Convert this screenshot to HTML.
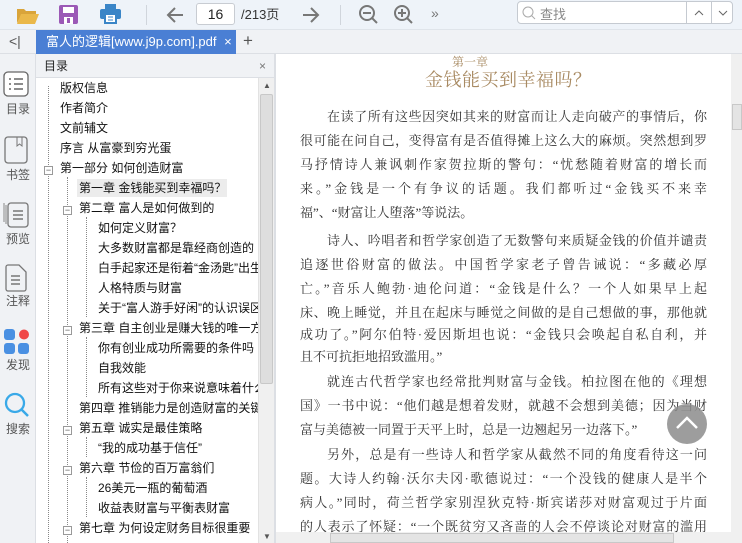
<!DOCTYPE html>
<html><head><meta charset="utf-8"><style>
*{margin:0;padding:0;box-sizing:border-box}
body{width:742px;height:543px;overflow:hidden;position:relative;background:#fff;font-family:"Liberation Sans","Noto Sans CJK SC",sans-serif;color:#222}
.abs{position:absolute}
#tb{left:0;top:0;width:742px;height:30px;background:#eef3f9;border-bottom:1px solid #dfe4ea}
#tabs{left:0;top:30px;width:742px;height:24px;background:#f0f2f5;border-bottom:1px solid #dcdfe4}
#side{left:0;top:54px;width:36px;height:489px;background:#f0f2f5;border-right:1px solid #dcdfe4}
#toc{left:36px;top:54px;width:238px;height:489px;background:#fff}
#toch{left:0;top:0;width:238px;height:24px;background:#f0f2f5;border-bottom:1px solid #dcdfe4;font-size:12px;line-height:24px;padding-left:8px}
.ti{position:absolute;font-size:12px;line-height:16px;white-space:nowrap;color:#111}
.sl{position:absolute;font-size:12px;color:#555;text-align:center;width:36px;left:0}
.ln{position:absolute;left:300px;width:407px;font-family:"Liberation Serif","Noto Serif CJK SC",serif;font-size:13px;line-height:18px;color:#333;text-align:justify;text-align-last:justify;white-space:nowrap;overflow:hidden}
.ln.l{text-align-last:left}
.box{position:absolute;width:9px;height:9px;border:1px solid #999;background:#fff;font-size:9px;line-height:7px;text-align:center;color:#555}
</style></head><body>
<div id="tb" class="abs">
<svg class="abs" style="left:16px;top:5px" width="24" height="20"><path d="M1 4h7l2 2h10v3H6L1 18z" fill="#d9a43a"/><path d="M5 9h18l-4 10H1z" fill="#eab84a"/></svg>
<svg class="abs" style="left:59px;top:5px" width="19" height="19"><rect x="0" y="0" width="19" height="19" rx="2" fill="#9b59b6"/><rect x="4" y="2" width="11" height="6" fill="#fff"/><rect x="5" y="12" width="9" height="7" fill="#fff"/><rect x="8" y="13" width="3" height="5" fill="#9b59b6"/></svg>
<svg class="abs" style="left:100px;top:4px" width="21" height="20"><rect x="5" y="0" width="11" height="5" fill="#3a85c7"/><rect x="0" y="5" width="21" height="10" rx="2" fill="#3a85c7"/><rect x="5" y="10" width="11" height="9" fill="#fff" stroke="#3a85c7" stroke-width="2"/><line x1="8" y1="13" x2="13" y2="13" stroke="#3a85c7"/><line x1="8" y1="16" x2="13" y2="16" stroke="#3a85c7"/></svg>
<div class="abs" style="left:146px;top:5px;width:1px;height:20px;background:#d0d5dc"></div>
<svg class="abs" style="left:165px;top:6px" width="20" height="18"><path d="M18 9H3M10 2L3 9l7 7" stroke="#777" stroke-width="2" fill="none"/></svg>
<div class="abs" style="left:196px;top:3px;width:39px;height:22px;border:1px solid #c8ccd2;border-radius:3px;background:#fff;font-size:14px;line-height:20px;text-align:center">16</div>
<div class="abs" style="left:241px;top:5px;font-size:13px;line-height:20px;color:#333">/213页</div>
<svg class="abs" style="left:301px;top:6px" width="20" height="18"><path d="M2 9h15M10 2l7 7-7 7" stroke="#777" stroke-width="2" fill="none"/></svg>
<div class="abs" style="left:340px;top:5px;width:1px;height:20px;background:#d0d5dc"></div>
<svg class="abs" style="left:358px;top:4px" width="22" height="22"><circle cx="9" cy="9" r="7" stroke="#777" stroke-width="2" fill="none"/><path d="M5 9h8M14 14l5 5" stroke="#777" stroke-width="2"/></svg>
<svg class="abs" style="left:393px;top:4px" width="22" height="22"><circle cx="9" cy="9" r="7" stroke="#777" stroke-width="2" fill="none"/><path d="M5 9h8M9 5v8M14 14l5 5" stroke="#777" stroke-width="2"/></svg>
<div class="abs" style="left:431px;top:5px;font-size:14px;color:#777">»</div>
<div class="abs" style="left:517px;top:1px;width:216px;height:23px;border:1px solid #c5cad1;border-radius:4px;background:#fff"></div>
<svg class="abs" style="left:522px;top:6px" width="14" height="14"><circle cx="6" cy="6" r="5" stroke="#aaa" fill="none"/><path d="M9.5 9.5l3.5 3.5" stroke="#aaa"/></svg>
<div class="abs" style="left:540px;top:4px;font-size:13px;color:#888">查找</div>
<div class="abs" style="left:686px;top:1px;width:1px;height:23px;background:#c5cad1"></div>
<div class="abs" style="left:711px;top:1px;width:1px;height:23px;background:#c5cad1"></div>
<svg class="abs" style="left:694px;top:10px" width="10" height="6"><path d="M1 5l4-4 4 4" stroke="#666" fill="none"/></svg>
<svg class="abs" style="left:718px;top:10px" width="10" height="6"><path d="M1 1l4 4 4-4" stroke="#666" fill="none"/></svg>
</div>
<div id="tabs" class="abs">
<div class="abs" style="left:9px;top:3px;font-size:14px;color:#555">&lt;|</div>
<div class="abs" style="left:36px;top:0;width:200px;height:24px;background:#4a7fd4;color:#fff;font-size:13px;line-height:24px;padding-left:10px">富人的逻辑[www.j9p.com].pdf <span style="margin-left:4px">×</span></div>
<div class="abs" style="left:243px;top:1px;font-size:17px;color:#555">+</div>
</div>
<div id="side" class="abs">
<svg class="abs" style="left:3px;top:17px" width="26" height="26"><rect x="1" y="1" width="24" height="24" rx="4" fill="#fff" stroke="#666" stroke-width="1.3"/><path d="M6 8h2M11 8h9M6 13h2M11 13h9M6 18h2M11 18h9" stroke="#666" stroke-width="1.5"/></svg>
<div class="sl" style="top:46px">目录</div>
<svg class="abs" style="left:4px;top:82px" width="24" height="28"><rect x="1" y="1" width="22" height="26" rx="3" fill="none" stroke="#777" stroke-width="1.3"/><path d="M13 1v9l2.5-2 2.5 2V1" stroke="#777" fill="none"/></svg>
<div class="sl" style="top:112px">书签</div>
<svg class="abs" style="left:3px;top:146px" width="26" height="28"><path d="M3 24V5M1 22V3" stroke="#888" fill="none"/><rect x="5" y="3" width="20" height="24" rx="3" fill="none" stroke="#777" stroke-width="1.3"/><path d="M10 11h10M10 15h10M10 19h10" stroke="#777" stroke-width="1.5"/></svg>
<div class="sl" style="top:176px">预览</div>
<svg class="abs" style="left:5px;top:210px" width="22" height="28"><path d="M1 3a2 2 0 0 1 2-2h11l7 7v17a2 2 0 0 1-2 2H3a2 2 0 0 1-2-2z" fill="none" stroke="#777" stroke-width="1.3"/><path d="M6 12h9M6 16h9M6 20h9" stroke="#777" stroke-width="1.5"/></svg>
<div class="sl" style="top:238px">注释</div>
<svg class="abs" style="left:4px;top:275px" width="26" height="26"><rect x="0" y="0" width="11" height="11" rx="3" fill="#4a90e2"/><circle cx="20" cy="5.5" r="5" fill="#f04848"/><rect x="0" y="14" width="11" height="11" rx="3" fill="#4a90e2"/><rect x="14" y="14" width="11" height="11" rx="3" fill="#4a90e2"/></svg>
<div class="sl" style="top:302px">发现</div>
<svg class="abs" style="left:4px;top:338px" width="26" height="26"><circle cx="11" cy="11" r="9" stroke="#39a9e8" stroke-width="2.3" fill="none"/><path d="M17 17l7 7" stroke="#39a9e8" stroke-width="2.5"/></svg>
<div class="sl" style="top:366px">搜索</div>
</div>
<div id="toc" class="abs">
<div id="toch" class="abs">目录<span style="position:absolute;right:8px;color:#777">×</span></div>
<div class="abs" style="left:12px;top:32px;width:0;height:457px;border-left:1px dotted #888"></div>
<div class="abs" style="left:31px;top:123px;width:0;height:366px;border-left:1px dotted #888"></div>
<div class="abs" style="left:50px;top:163px;width:0;height:100px;border-left:1px dotted #888"></div>
<div class="abs" style="left:50px;top:283px;width:0;height:60px;border-left:1px dotted #888"></div>
<div class="abs" style="left:50px;top:383px;width:0;height:20px;border-left:1px dotted #888"></div>
<div class="abs" style="left:50px;top:423px;width:0;height:40px;border-left:1px dotted #888"></div>
<div class="abs" style="left:222px;top:24px;width:16px;height:465px;background:#f0f0f0;border-left:1px solid #e2e2e2"></div>
<div class="abs" style="left:224px;top:40px;width:13px;height:290px;background:#dedede;border:1px solid #c8c8c8;border-radius:2px"></div>
<div class="abs" style="left:227px;top:27px;font-size:8px;color:#555">▲</div>
<div class="abs" style="left:227px;top:478px;font-size:8px;color:#555">▼</div>
<div class="abs" style="left:41px;top:125px;width:150px;height:18px;background:#ececec"></div>
<div style="position:absolute;left:0;top:0;width:222px;height:489px;overflow:hidden">
<div class="box" style="left:8px;top:112px">−</div>
<div class="box" style="left:27px;top:152px">−</div>
<div class="box" style="left:27px;top:272px">−</div>
<div class="box" style="left:27px;top:372px">−</div>
<div class="box" style="left:27px;top:412px">−</div>
<div class="box" style="left:27px;top:472px">−</div>
<div class="ti" style="left:24px;top:26px">版权信息</div>
<div class="ti" style="left:24px;top:46px">作者简介</div>
<div class="ti" style="left:24px;top:66px">文前辅文</div>
<div class="ti" style="left:24px;top:86px">序言 从富豪到穷光蛋</div>
<div class="ti" style="left:24px;top:106px">第一部分 如何创造财富</div>
<div class="ti" style="left:43px;top:126px">第一章 金钱能买到幸福吗？</div>
<div class="ti" style="left:43px;top:146px">第二章 富人是如何做到的</div>
<div class="ti" style="left:62px;top:166px">如何定义财富？</div>
<div class="ti" style="left:62px;top:186px">大多数财富都是靠经商创造的</div>
<div class="ti" style="left:62px;top:206px">白手起家还是衔着“金汤匙”出生</div>
<div class="ti" style="left:62px;top:226px">人格特质与财富</div>
<div class="ti" style="left:62px;top:246px">关于“富人游手好闲”的认识误区</div>
<div class="ti" style="left:43px;top:266px">第三章 自主创业是赚大钱的唯一方法</div>
<div class="ti" style="left:62px;top:286px">你有创业成功所需要的条件吗</div>
<div class="ti" style="left:62px;top:306px">自我效能</div>
<div class="ti" style="left:62px;top:326px">所有这些对于你来说意味着什么</div>
<div class="ti" style="left:43px;top:346px">第四章 推销能力是创造财富的关键</div>
<div class="ti" style="left:43px;top:366px">第五章 诚实是最佳策略</div>
<div class="ti" style="left:62px;top:386px">“我的成功基于信任”</div>
<div class="ti" style="left:43px;top:406px">第六章 节俭的百万富翁们</div>
<div class="ti" style="left:62px;top:426px">26美元一瓶的葡萄酒</div>
<div class="ti" style="left:62px;top:446px">收益表财富与平衡表财富</div>
<div class="ti" style="left:43px;top:466px">第七章 为何设定财务目标很重要</div>
</div>
</div>
<div class="abs" style="left:274px;top:54px;width:2px;height:489px;background:#dcdfe4"></div>
<div class="abs" style="left:731px;top:54px;width:11px;height:478px;background:#f0f0f0"></div>
<div class="abs" style="left:732px;top:104px;width:10px;height:26px;background:#e4e4e4;border:1px solid #c8c8c8"></div>
<div class="abs" style="left:276px;top:532px;width:466px;height:11px;background:#f0f0f0"></div>
<div class="abs" style="left:330px;top:533px;width:344px;height:10px;background:#e4e4e4;border:1px solid #c8c8c8"></div>
<div class="abs" style="left:452px;top:53px;font-family:'Liberation Serif','Noto Serif CJK SC',serif;font-size:12px;color:#a88a62">第一章</div>
<div class="abs" style="left:425px;top:66px;font-family:'Liberation Serif','Noto Serif CJK SC',serif;font-size:18px;color:#a88a62;letter-spacing:0.5px">金钱能买到幸福吗？</div>
<div class="ln" style="top:108px"><span style="padding-left:27px"></span>在读了所有这些因突如其来的财富而让人走向破产的事情后，你</div>
<div class="ln" style="top:132px">很可能在问自己，变得富有是否值得摊上这么大的麻烦。突然想到罗</div>
<div class="ln" style="top:156px">马抒情诗人兼讽刺作家贺拉斯的警句：“忧愁随着财富的增长而</div>
<div class="ln" style="top:180px">来。”金钱是一个有争议的话题。我们都听过“金钱买不来幸</div>
<div class="ln l" style="top:204px">福”、“财富让人堕落”等说法。</div>
<div class="ln" style="top:232px"><span style="padding-left:27px"></span>诗人、吟唱者和哲学家创造了无数警句来质疑金钱的价值并谴责</div>
<div class="ln" style="top:256px">追逐世俗财富的做法。中国哲学家老子曾告诫说：“多藏必厚</div>
<div class="ln" style="top:280px">亡。”音乐人鲍勃·迪伦问道：“金钱是什么？一个人如果早上起</div>
<div class="ln" style="top:304px">床、晚上睡觉，并且在起床与睡觉之间做的是自己想做的事，那他就</div>
<div class="ln" style="top:326px">成功了。”阿尔伯特·爱因斯坦也说：“金钱只会唤起自私自利，并</div>
<div class="ln l" style="top:348px">且不可抗拒地招致滥用。”</div>
<div class="ln" style="top:373px"><span style="padding-left:27px"></span>就连古代哲学家也经常批判财富与金钱。柏拉图在他的《理想</div>
<div class="ln" style="top:397px">国》一书中说：“他们越是想着发财，就越不会想到美德；因为当财</div>
<div class="ln l" style="top:421px">富与美德被一同置于天平上时，总是一边翘起另一边落下。”</div>
<div class="ln" style="top:446px"><span style="padding-left:27px"></span>另外，总是有一些诗人和哲学家从截然不同的角度看待这一问</div>
<div class="ln" style="top:470px">题。大诗人约翰·沃尔夫冈·歌德说过：“一个没钱的健康人是半个</div>
<div class="ln" style="top:494px">病人。”同时，荷兰哲学家别涅狄克特·斯宾诺莎对财富观过于片面</div>
<div class="ln" style="top:518px">的人表示了怀疑：“一个既贫穷又吝啬的人会不停谈论对财富的滥用</div>
<div class="abs" style="left:667px;top:404px;width:40px;height:40px;border-radius:50%;background:rgba(140,140,140,0.85)"></div>
<svg class="abs" style="left:675px;top:415px" width="24" height="16"><path d="M2 13L12 3l10 10" stroke="#fff" stroke-width="2.5" fill="none"/></svg>
</body></html>
